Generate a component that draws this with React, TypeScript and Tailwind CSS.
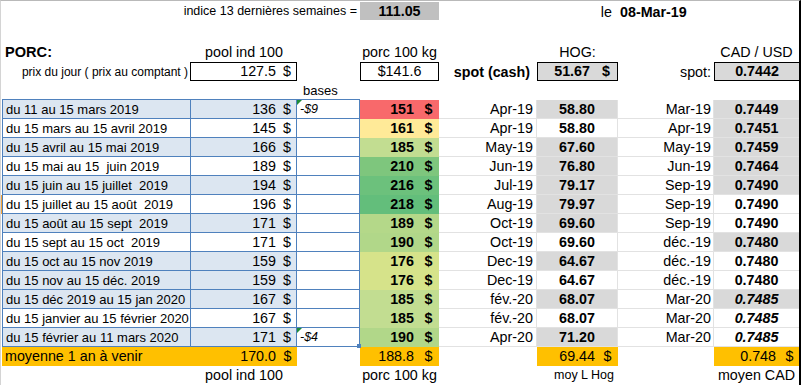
import React from 'react';

type Row = {
  period: string;
  pool: number;
  base?: string;
  porc: number;
  porcBg: string;
  hogMonth: string;
  hog: string;
  hogGray: boolean;
  cadMonth: string;
  cad: string;
  cadGray: boolean;
  italic?: boolean;
  blue: boolean;
};

const rows: Row[] = [
  { period: 'du 11 au 15 mars 2019', pool: 136, base: '-$9', porc: 151, porcBg: 'bg-[#f8696b]', hogMonth: 'Apr-19', hog: '58.80', hogGray: true, cadMonth: 'Mar-19', cad: '0.7449', cadGray: true, blue: true },
  { period: 'du 15 mars au 15 avril 2019', pool: 145, porc: 161, porcBg: 'bg-[#ffea98]', hogMonth: 'Apr-19', hog: '58.80', hogGray: false, cadMonth: 'Apr-19', cad: '0.7451', cadGray: true, blue: false },
  { period: 'du 15 avril au 15 mai 2019', pool: 166, porc: 185, porcBg: 'bg-[#c2dd91]', hogMonth: 'May-19', hog: '67.60', hogGray: true, cadMonth: 'May-19', cad: '0.7459', cadGray: true, blue: true },
  { period: 'du 15 mai au 15  juin 2019', pool: 189, porc: 210, porcBg: 'bg-[#7ec67d]', hogMonth: 'Jun-19', hog: '76.80', hogGray: true, cadMonth: 'Jun-19', cad: '0.7464', cadGray: true, blue: false },
  { period: 'du 15 juin au 15 juillet  2019', pool: 194, porc: 216, porcBg: 'bg-[#6cc17c]', hogMonth: 'Jul-19', hog: '79.17', hogGray: true, cadMonth: 'Sep-19', cad: '0.7490', cadGray: true, blue: true },
  { period: 'du 15 juillet au 15 août  2019', pool: 196, porc: 218, porcBg: 'bg-[#63be7b]', hogMonth: 'Aug-19', hog: '79.97', hogGray: true, cadMonth: 'Sep-19', cad: '0.7490', cadGray: false, blue: false },
  { period: 'du 15 août au 15 sept  2019', pool: 171, porc: 189, porcBg: 'bg-[#b4d889]', hogMonth: 'Oct-19', hog: '69.60', hogGray: true, cadMonth: 'Sep-19', cad: '0.7490', cadGray: false, blue: true },
  { period: 'du 15 sept au 15 oct  2019', pool: 171, porc: 190, porcBg: 'bg-[#b1d789]', hogMonth: 'Oct-19', hog: '69.60', hogGray: false, cadMonth: 'déc.-19', cad: '0.7480', cadGray: true, blue: false },
  { period: 'du 15 oct au 15 nov 2019', pool: 159, porc: 176, porcBg: 'bg-[#d6e38a]', hogMonth: 'Dec-19', hog: '64.67', hogGray: true, cadMonth: 'déc.-19', cad: '0.7480', cadGray: false, blue: true },
  { period: 'du 15 nov au 15 déc. 2019', pool: 159, porc: 176, porcBg: 'bg-[#d6e38a]', hogMonth: 'Dec-19', hog: '64.67', hogGray: false, cadMonth: 'déc.-19', cad: '0.7480', cadGray: false, blue: true },
  { period: 'du 15 déc 2019 au 15 jan 2020', pool: 167, porc: 185, porcBg: 'bg-[#c2dd91]', hogMonth: 'fév.-20', hog: '68.07', hogGray: true, cadMonth: 'Mar-20', cad: '0.7485', cadGray: true, italic: true, blue: true },
  { period: 'du 15 janvier au 15 février 2020', pool: 167, porc: 185, porcBg: 'bg-[#c2dd91]', hogMonth: 'fév.-20', hog: '68.07', hogGray: false, cadMonth: 'Mar-20', cad: '0.7485', cadGray: false, italic: true, blue: false },
  { period: 'du 15 février au 11 mars 2020', pool: 171, base: '-$4', porc: 190, porcBg: 'bg-[#b1d789]', hogMonth: 'Apr-20', hog: '71.20', hogGray: true, cadMonth: 'Mar-20', cad: '0.7485', cadGray: false, italic: true, blue: true },
];

const Dollar = ({ w }: { w: string }) => <span className={`${w} text-center`}>$</span>;

export default function App() {
  return (
    <div className="w-[803px] h-[385px] overflow-hidden bg-white text-black text-[14.3px] leading-none font-['Liberation_Sans',Arial,sans-serif]">
      <div className="w-[801px] h-[385px] border-t border-t-[#b9b9b9] border-l border-l-[#d4d4d4] border-r-2 border-r-black">
        {/* indice / date */}
        <div className="flex h-[21px]">
          <div className="w-[1px]" />
          <div className="w-[358px] flex items-center justify-end pr-[3px] text-[12.5px]">indice 13 dernières semaines =</div>
          <div className="w-[79px] pt-[1px]">
            <div className="h-[18px] bg-[#c0c0c0] flex items-center justify-center font-bold">111.05</div>
          </div>
          <div className="w-[98px]" />
          <div className="w-[81px] flex items-center justify-end pr-[6px] pt-[2px]">le</div>
          <div className="w-[96px] flex items-center pl-[2px] pt-[2px] font-bold">08-Mar-19</div>
          <div className="w-[85px]" />
        </div>
        <div className="h-[20px]" />

        {/* headings */}
        <div className="flex h-[20px] items-center">
          <div className="w-[1px]" />
          <div className="w-[189px] pl-[3px] font-bold text-[14.6px]">PORC:</div>
          <div className="w-[106px] text-center">pool ind 100</div>
          <div className="w-[63px]" />
          <div className="w-[79px] text-center">porc 100 kg</div>
          <div className="w-[98px]" />
          <div className="w-[81px] text-center">HOG:</div>
          <div className="w-[96px]" />
          <div className="w-[85px] text-center">CAD / USD</div>
        </div>

        {/* spot prices */}
        <div className="flex h-[20px]">
          <div className="w-[1px]" />
          <div className="w-[188px] flex items-center justify-end pr-[2px] text-[12px]">prix du jour ( prix au comptant )</div>
          <div className="w-[107px] h-[19px] border border-black flex items-center justify-end">
            <span className="mr-[2px]">127.5</span>
            <Dollar w="w-[18px]" />
          </div>
          <div className="w-[63px]" />
          <div className="w-[79px] h-[19px] border border-black flex items-center justify-center">$141.6</div>
          <div className="w-[98px] flex items-center justify-end pr-[7px] font-bold">spot (cash)</div>
          <div className="w-[81px] h-[19px] border border-black bg-[#d9d9d9] flex items-center justify-end font-bold">
            <span className="mr-[5px]">51.67</span>
            <Dollar w="w-[22px]" />
          </div>
          <div className="w-[96px] flex items-center justify-end pr-[3px]">spot:</div>
          <div className="w-[85px] h-[19px] border border-black border-r-0 bg-[#d9d9d9] flex items-center justify-center font-bold">0.7442</div>
        </div>

        {/* bases label */}
        <div className="flex h-[17px] items-center">
          <div className="w-[1px]" />
          <div className="w-[295px]" />
          <div className="w-[63px] pl-[6px] text-[13px]">bases</div>
        </div>
        <div className="flex h-[1px]">
          <div className="w-[1px]" />
          <div className="w-[358px] bg-[#4f81bd]" />
        </div>

        {/* monthly rows */}
        {rows.map((r, i) => (
          <div key={i} className="flex h-[19px]">
            <div className={`w-[1px] ${i === 5 ? 'bg-[#f2a33a]' : ''}`} />
            <div className={`w-[189px] border-l border-r border-b border-[#4f81bd] pl-[3px] flex items-center whitespace-pre text-[13px] ${r.blue ? 'bg-[#dce6f1]' : 'bg-white'}`}>
              {r.period}
            </div>
            <div className={`w-[106px] border-r border-b border-[#4f81bd] flex items-center justify-end ${r.blue ? 'bg-[#dce6f1]' : 'bg-white'}`}>
              <span className="mr-[2px]">{r.pool}</span>
              <Dollar w="w-[18px]" />
            </div>
            <div className="relative w-[63px] border-r border-b border-[#4f81bd] flex items-center pl-[3px] italic text-[12.5px]">
              {r.base && (
                <span className="absolute left-0 top-0 w-0 h-0 border-t-[5px] border-r-[5px] border-t-[#1e8c3a] border-r-transparent" />
              )}
              {r.base}
              {i === rows.length - 1 && (
                <span className="absolute right-[-2px] bottom-[-2px] w-[4px] h-[4px] bg-[#4f81bd]" />
              )}
            </div>
            <div className={`w-[79px] ${r.porcBg} flex items-center justify-end font-bold`}>
              <span className="mr-[4px]">{r.porc}</span>
              <Dollar w="w-[21px]" />
            </div>
            <div className="w-[98px] border-r border-b border-[#e2e2e2] flex items-center justify-end pr-[3px]">{r.hogMonth}</div>
            <div className={`w-[81px] border-r border-b border-[#e2e2e2] flex items-center justify-center font-bold ${r.hogGray ? 'bg-[#d9d9d9]' : 'bg-white'}`}>
              {r.hog}
            </div>
            <div className="w-[96px] border-r border-b border-[#e2e2e2] flex items-center justify-end pr-[2px]">{r.cadMonth}</div>
            <div className={`w-[85px] border-b border-[#e2e2e2] flex items-center justify-center font-bold ${r.italic ? 'italic' : ''} ${r.cadGray ? 'bg-[#d9d9d9]' : 'bg-white'}`}>
              {r.cad}
            </div>
          </div>
        ))}

        {/* yearly average */}
        <div className="flex h-[19px]">
          <div className="w-[1px]" />
          <div className="w-[295px] bg-[#ffc000] flex items-center justify-between">
            <span className="pl-[3px]">moyenne 1 an à venir</span>
            <span className="flex items-center">
              <span className="mr-[2px]">170.0</span>
              <Dollar w="w-[19px]" />
            </span>
          </div>
          <div className="w-[63px]" />
          <div className="w-[79px] bg-[#ffc000] flex items-center justify-end">
            <span className="mr-[4px]">188.8</span>
            <Dollar w="w-[21px]" />
          </div>
          <div className="w-[98px]" />
          <div className="w-[81px] bg-[#ffc000] flex items-center justify-end">
            <span className="mr-[2px]">69.44</span>
            <Dollar w="w-[21px]" />
          </div>
          <div className="w-[96px]" />
          <div className="w-[85px] bg-[#ffc000] flex items-center justify-end">
            <span className="mr-[4px]">0.748</span>
            <Dollar w="w-[19px]" />
          </div>
        </div>

        {/* column captions */}
        <div className="flex h-[19px] items-center">
          <div className="w-[1px]" />
          <div className="w-[189px]" />
          <div className="w-[106px] text-center">pool ind 100</div>
          <div className="w-[63px]" />
          <div className="w-[79px] text-center">porc 100 kg</div>
          <div className="w-[98px]" />
          <div className="w-[81px] text-right pr-[4px] text-[12.5px]">moy L Hog</div>
          <div className="w-[96px]" />
          <div className="w-[85px] text-center">moyen CAD</div>
        </div>
      </div>
    </div>
  );
}
